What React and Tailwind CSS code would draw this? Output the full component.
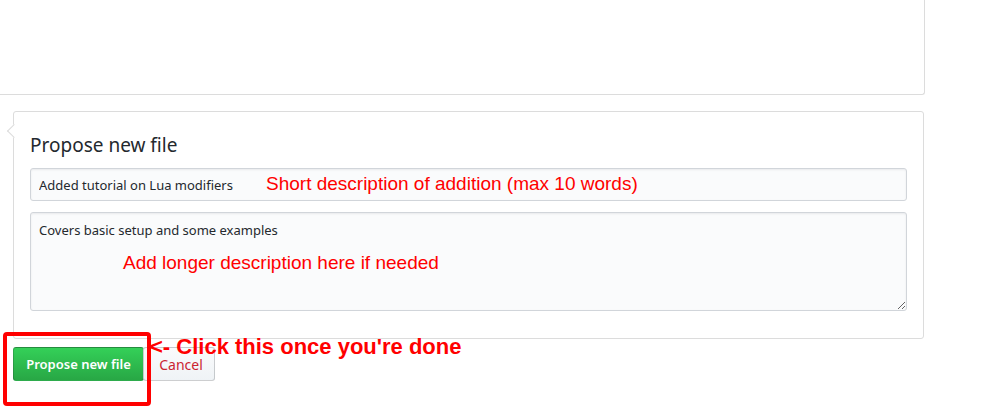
import React from "react";

export default function App() {
    return (
        <div className="relative w-[1006px] h-[412px] overflow-hidden bg-white text-[#24292e] font-['Noto_Sans',sans-serif]">
            {/* file editor box, cut off at the top */}
            <div className="w-[925px] h-[95px] border-r border-b border-[#dcdcdc] rounded-br-[3px]"></div>

            <div className="pl-[13px] pt-[16px]">
                <div className="relative w-[911px] h-[228px] border border-[#dcdcdc] rounded-[3px] bg-white px-[16px] pt-[20px]">
                    <div className="absolute left-[-5px] top-[14px] w-[10px] h-[10px] rotate-45 bg-white border-l border-b border-[#dcdcdc]"></div>
                    <h3 className="relative text-[19px] leading-[26px] font-normal">Propose new file</h3>
                    <input
                        readOnly
                        value="Added tutorial on Lua modifiers"
                        className="mt-[10px] block w-[877px] h-[33px] px-[8px] text-[13px] bg-[#fafbfc] border border-[#d1d5da] rounded-[3px] outline-none shadow-[inset_0_1px_2px_rgba(27,31,35,0.075)]"
                    />
                    <textarea
                        readOnly
                        value="Covers basic setup and some examples"
                        className="mt-[11px] block w-[877px] h-[99px] px-[8px] pt-[7px] text-[13px] leading-[20px] bg-[#fafbfc] border border-[#d1d5da] rounded-[3px] outline-none shadow-[inset_0_1px_2px_rgba(27,31,35,0.075)]"
                    />
                </div>

                <div className="flex mt-[8px]">
                    <button className="w-[131px] h-[34px] pt-px rounded-[3px] border border-[rgba(27,31,35,0.2)] bg-gradient-to-b from-[#34d058] to-[#28a745] text-white text-[13px] font-semibold">
                        Propose new file
                    </button>
                    <button className="w-[72px] h-[34px] pl-[4px] -ml-px rounded-[3px] border border-[rgba(27,31,35,0.2)] bg-gradient-to-b from-[#fafbfc] to-[#eff3f6] text-[#cb2431] text-[14px]">
                        Cancel
                    </button>
                </div>
            </div>

            {/* annotations */}
            <div className="absolute inset-0 pointer-events-none font-['Liberation_Sans',Arial,sans-serif] text-[#ff0000]">
                <span className="absolute left-[266px] top-[173px] text-[19px] leading-[22px]">
                    Short description of addition (max 10 words)
                </span>
                <span className="absolute left-[123px] top-[252px] text-[19px] leading-[22px]">
                    Add longer description here if needed
                </span>
                <span className="absolute left-[150px] top-[337px] text-[22px] leading-[20px] font-bold">
                    &lt;- Click this once you're done
                </span>
                <div className="absolute left-[3px] top-[332px] w-[148px] h-[74px] border-[4px] border-[#ff0000] rounded-[4px]"></div>
            </div>
        </div>
    );
}
